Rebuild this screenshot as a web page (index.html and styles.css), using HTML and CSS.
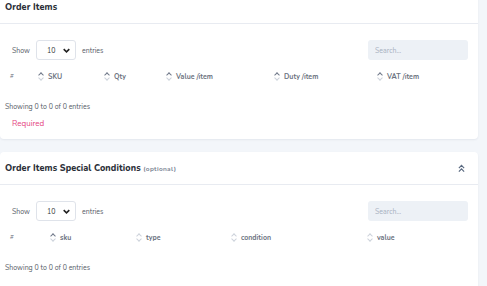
FILE: index.html
```html
<!DOCTYPE html>
<html lang="en">
<head>
  <meta charset="UTF-8" />
  <title>Order Items</title>
  <link rel="stylesheet" href="styles.css">
</head>
<body>
  <div class="page">

    <!-- Order items -->
    <section class="card card-first">
      <div class="card-header">
        <h3 class="card-title">Order Items</h3>
      </div>
      <div class="card-body">
        <div class="toolbar">
          <div class="length">
            <span>Show</span>
            <div class="select">
              <span>10</span>
              <svg class="caret" viewBox="0 0 10 6" width="7" height="5"><path d="M1 1l4 4 4-4" fill="none" stroke="#222" stroke-width="2.2"/></svg>
            </div>
            <span>entries</span>
          </div>
          <input class="search" type="text" placeholder="Search...">
        </div>

        <div class="thead cols-items">
          <div class="th">#</div>
          <div class="th"><span class="sort active"></span>SKU</div>
          <div class="th"><span class="sort active"></span>Qty</div>
          <div class="th"><span class="sort active"></span>Value /item</div>
          <div class="th"><span class="sort active"></span>Duty /item</div>
          <div class="th"><span class="sort active"></span>VAT /item</div>
        </div>

        <div class="info">Showing 0 to 0 of 0 entries</div>
        <div class="required">Required</div>
      </div>
    </section>

    <!-- Special conditions -->
    <section class="card card-last">
      <div class="card-header">
        <h3 class="card-title">Order Items Special Conditions <small>(optional)</small></h3>
        <svg class="collapse" viewBox="0 0 8 10" width="7" height="9">
          <path d="M1 4.5l3-3 3 3M1 8.5l3-3 3 3" fill="none" stroke="#5b6b82" stroke-width="1.4"/>
        </svg>
      </div>
      <div class="card-body">
        <div class="toolbar">
          <div class="length">
            <span>Show</span>
            <div class="select">
              <span>10</span>
              <svg class="caret" viewBox="0 0 10 6" width="7" height="5"><path d="M1 1l4 4 4-4" fill="none" stroke="#222" stroke-width="2.2"/></svg>
            </div>
            <span>entries</span>
          </div>
          <input class="search" type="text" placeholder="Search...">
        </div>

        <div class="thead cols-cond">
          <div class="th">#</div>
          <div class="th"><span class="sort active"></span>sku</div>
          <div class="th"><span class="sort"></span>type</div>
          <div class="th"><span class="sort"></span>condition</div>
          <div class="th"><span class="sort"></span>value</div>
        </div>

        <div class="info">Showing 0 to 0 of 0 entries</div>
      </div>
    </section>

  </div>
</body>
</html>
```

FILE: styles.css
```css
body {
  margin: 0;
  background: #f3f6fa;
  font-family: "Nunito", "Lato", "Open Sans", sans-serif;
  color: #4a5568;
  font-size: 7px;
}
.page {
  padding-right: 9px;
}
/* Cards */
.card {
  background: #fff;
  border-radius: 0 0 4px 4px;
  box-shadow: 0 1px 2px rgba(50, 60, 90, 0.08);
  margin-bottom: 13px;
}
/* first card is scrolled partly out of view */
.card-first {
  margin-top: -9px;
}
/* last card runs on past the bottom of the view */
.card-last {
  border-radius: 4px 4px 0 0;
  margin-bottom: 0;
}
.card-last .card-body {
  padding-bottom: 13px;
}
.card-header {
  height: 32px;
  display: flex;
  align-items: center;
  justify-content: space-between;
  padding: 0 13px 0 5px;
  border-bottom: 1px solid #e8ebf1;
}
.card-title {
  margin: 0;
  font-size: 9px;
  font-weight: 800;
  color: #2b2f38;
  letter-spacing: 0.1px;
}
.card-title small {
  font-size: 6.5px;
  font-weight: 700;
  color: #7a8494;
  letter-spacing: 0.3px;
}
.card-body {
  padding: 16px 10px 9px 5px;
}
/* Length + search */
.toolbar {
  display: flex;
  justify-content: space-between;
  align-items: center;
  height: 20px;
}
.length {
  display: flex;
  align-items: center;
  gap: 6px;
  padding-left: 7px;
  color: #555b66;
}
.select {
  width: 40px;
  height: 20px;
  box-sizing: border-box;
  border: 1px solid #dfe3ea;
  border-radius: 3px;
  display: flex;
  align-items: center;
  justify-content: space-between;
  padding: 0 5px 0 10px;
  color: #333;
}
.caret {
  display: block;
}
.search {
  width: 100px;
  height: 20px;
  box-sizing: border-box;
  border: none;
  border-radius: 3px;
  background: #edf1f6;
  padding: 0 7px;
  font-family: inherit;
  font-size: 7px;
  color: #555;
}
.search::placeholder {
  color: #a6b0c0;
}
/* Table head */
.thead {
  display: grid;
  height: 20px;
  margin-top: 6px;
  align-items: center;
}
.cols-items {
  grid-template-columns: 27px 66px 62px 108px 103px 1fr;
}
.cols-cond {
  grid-template-columns: 39px 86px 95px 136px 1fr;
}
.th {
  display: flex;
  align-items: center;
  padding-left: 5px;
  font-weight: 700;
  color: #6b7280;
}
.th:first-child {
  font-size: 6px;
  font-style: italic;
  font-weight: 400;
}
/* sort arrows, drawn with borders */
.sort {
  position: relative;
  width: 7px;
  height: 10px;
  margin-right: 4px;
}
.sort::before,
.sort::after {
  content: "";
  position: absolute;
  left: 1.5px;
  width: 3px;
  height: 3px;
  border-left: 1.2px solid #cdd2db;
  border-top: 1.2px solid #cdd2db;
}
.sort::before {
  top: 1.5px;
  transform: rotate(45deg);
}
.sort::after {
  bottom: 1.5px;
  transform: rotate(-135deg);
}
.sort.active::before {
  border-color: #6f7889;
}
.info {
  margin-top: 16px;
  line-height: 10px;
  color: #555b66;
}
.required {
  margin-top: 6px;
  padding-left: 7px;
  line-height: 12px;
  font-size: 8px;
  color: #e4457f;
}
```
